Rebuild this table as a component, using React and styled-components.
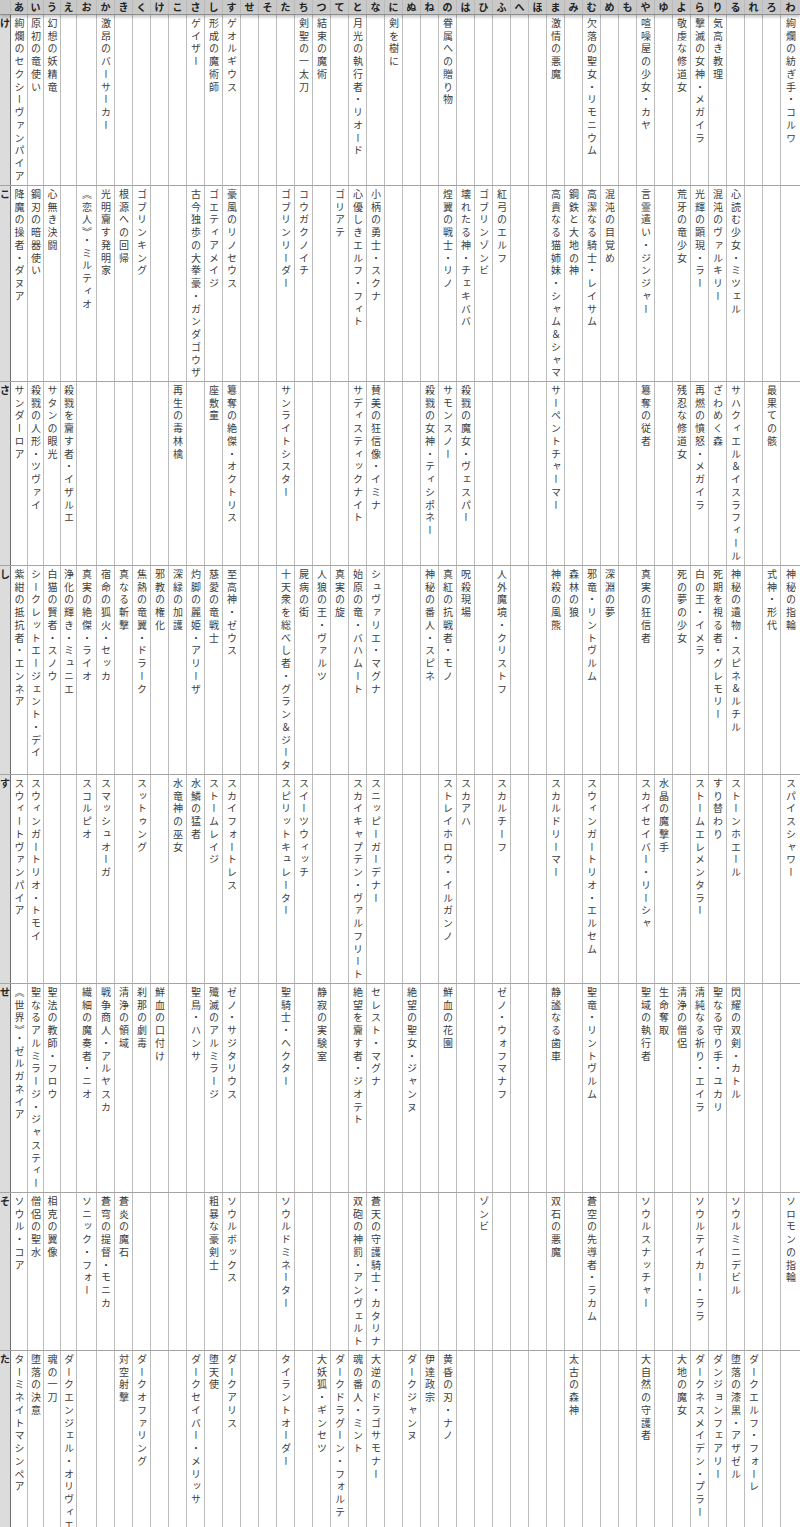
import React from 'react'
import styled, { createGlobalStyle } from 'styled-components'

const GlobalStyle = createGlobalStyle`
  *, *::before, *::after { box-sizing: border-box; }
  body {
    margin: 0;
    background: #fff;
    font-family: "Noto Sans CJK JP", "Noto Sans", sans-serif;
  }
`

const KANA = 'あいうえおかきくけこさしすせそたちつてとなにぬねのはひふへほまみむめもやゆよらりるれろわ'.split('')

// label column + 44 kana columns, widths taken from the sheet
const COLUMNS = '11px 17px 16px 17px 16px 20px repeat(38, 18px) 19px'

const ROWS = [
  {
    label: 'け',
    cells: {
      あ: '絢爛のセクシーヴァンパイア', い: '原初の竜使い', う: '幻想の妖精竜', か: '激昂のバーサーカー',
      さ: 'ゲイザー', し: '形成の魔術師', す: 'ゲオルギウス', ち: '剣聖の一太刀', つ: '結束の魔術',
      と: '月光の執行者・リオード', に: '剣を樹に', の: '眷属への贈り物', ま: '激情の悪魔',
      む: '欠落の聖女・リモニウム', や: '喧噪屋の少女・カヤ', よ: '敬虔な修道女', ら: '撃滅の女神・メガイラ',
      り: '気高き教理', わ: '絢爛の紡ぎ手・コルワ',
    },
  },
  {
    label: 'こ',
    cells: {
      あ: '降魔の操者・ダヌア', い: '鋼刃の暗器使い', う: '心無き決闘', お: '《恋人》・ミルティオ',
      か: '光明齎す発明家', き: '根源への回帰', く: 'ゴブリンキング', さ: '古今独歩の大拳豪・ガンダゴウザ',
      し: 'ゴエティアメイジ', す: '豪風のリノセウス', た: 'ゴブリンリーダー', ち: 'コウガクノイチ',
      て: 'ゴリアテ', と: '心優しきエルフ・フィト', な: '小柄の勇士・スクナ', の: '煌翼の戦士・リノ',
      は: '壊れたる神・チェキババ', ひ: 'ゴブリンゾンビ', ふ: '紅弓のエルフ', ま: '高貴なる猫姉妹・シャム＆シャマ',
      み: '鋼鉄と大地の神', む: '高潔なる騎士・レイサム', め: '混沌の目覚め', や: '言霊遣い・ジンジャー',
      よ: '荒牙の竜少女', ら: '光輝の顕現・ラー', り: '混沌のヴァルキリー', る: '心読む少女・ミツェル',
    },
  },
  {
    label: 'さ',
    cells: {
      あ: 'サンダーロア', い: '殺戮の人形・ツヴァイ', う: 'サタンの眼光', え: '殺戮を齎す者・イザルエ',
      こ: '再生の毒林檎', し: '座敷童', す: '簒奪の絶傑・オクトリス', た: 'サンライトシスター',
      と: 'サディスティックナイト', な: '賛美の狂信像・イミナ', ね: '殺戮の女神・ティシポネー',
      の: 'サモンスノー', は: '殺戮の魔女・ヴェスパー', ま: 'サーペントチャーマー', や: '簒奪の従者',
      よ: '残忍な修道女', ら: '再燃の憤怒・メガイラ', り: 'ざわめく森', る: 'サハクィエル＆イスラフィール',
      ろ: '最果ての骸',
    },
  },
  {
    label: 'し',
    cells: {
      あ: '紫紺の抵抗者・エンネア', い: 'シークレットエージェント・デイ', う: '白猫の賢者・スノウ',
      え: '浄化の輝き・ミュニエ', お: '真実の絶傑・ライオ', か: '宿命の狐火・セッカ', き: '真なる斬撃',
      く: '焦熱の竜翼・ドラーク', け: '邪教の権化', こ: '深緑の加護', さ: '灼脚の麗姫・アリーザ',
      し: '慈愛の竜戦士', す: '至高神・ゼウス', た: '十天衆を総べし者・グラン＆ジータ', ち: '屍病の街',
      つ: '人狼の王・ヴァルツ', て: '真実の旋', と: '始原の竜・バハムート', な: 'シュヴァリエ・マグナ',
      ね: '神秘の番人・スピネ', の: '真紅の抗戦者・モノ', は: '呪殺現場', ふ: '人外魔境・クリストフ',
      ま: '神殺の風熊', み: '森林の狼', む: '邪竜・リントヴルム', め: '深淵の夢', や: '真実の狂信者',
      よ: '死の夢の少女', ら: '白の王・イメラ', り: '死期を視る者・グレモリー', る: '神秘の遺物・スピネ＆ルチル',
      ろ: '式神・形代', わ: '神秘の指輪',
    },
  },
  {
    label: 'す',
    cells: {
      あ: 'スウィートヴァンパイア', い: 'スウィンガートリオ・トモイ', お: 'スコルピオ', か: 'スマッシュオーガ',
      く: 'スットゥング', こ: '水竜神の巫女', さ: '水鱗の猛者', し: 'ストームレイジ', す: 'スカイフォートレス',
      た: 'スピリットキュレーター', ち: 'スイーツウィッチ', と: 'スカイキャプテン・ヴァルフリート',
      な: 'スニッピーガーデナー', の: 'ストレイホロウ・イルガンノ', は: 'スカアハ', ふ: 'スカルチーフ',
      ま: 'スカルドリーマー', む: 'スウィンガートリオ・エルセム', や: 'スカイセイバー・リーシャ',
      ゆ: '水晶の魔撃手', ら: 'ストームエレメンタラー', り: 'すり替わり', る: 'ストーンホエール',
      わ: 'スパイスシャワー',
    },
  },
  {
    label: 'せ',
    cells: {
      あ: '《世界》・ゼルガネイア', い: '聖なるアルミラージ・ジャスティー', う: '聖法の教師・フロウ',
      お: '繊細の魔奏者・ニオ', か: '戦争商人・アルヤスカ', き: '清浄の領域', く: '刹那の劇毒',
      け: '鮮血の口付け', さ: '聖鳥・ハンサ', し: '殲滅のアルミラージ', す: 'ゼノ・サジタリウス',
      た: '聖騎士・ヘクター', つ: '静寂の実験室', と: '絶望を齎す者・ジオテト', な: 'セレスト・マグナ',
      ぬ: '絶望の聖女・ジャンヌ', の: '鮮血の花園', ふ: 'ゼノ・ウォフマナフ', ま: '静謐なる歯車',
      む: '聖竜・リントヴルム', や: '聖域の執行者', ゆ: '生命奪取', よ: '清浄の僧侶',
      ら: '清純なる祈り・エイラ', り: '聖なる守り手・ユカリ', る: '閃耀の双剣・カトル',
    },
  },
  {
    label: 'そ',
    cells: {
      あ: 'ソウル・コア', い: '僧侶の聖水', う: '相克の翼像', お: 'ソニック・フォー', か: '蒼穹の提督・モニカ',
      き: '蒼炎の魔石', し: '粗暴な豪剣士', す: 'ソウルボックス', た: 'ソウルドミネーター',
      と: '双砲の神罰・アンヴェルト', な: '蒼天の守護騎士・カタリナ', ひ: 'ゾンビ', ま: '双石の悪魔',
      む: '蒼空の先導者・ラカム', や: 'ソウルスナッチャー', ら: 'ソウルテイカー・ララ', る: 'ソウルミニデビル',
      わ: 'ソロモンの指輪',
    },
  },
  {
    label: 'た',
    cells: {
      あ: 'ターミネイトマシンペア', い: '堕落の決意', う: '魂の一刀', え: 'ダークエンジェル・オリヴィエ',
      き: '対空射撃', く: 'ダークオファリング', さ: 'ダークセイバー・メリッサ', し: '堕天使',
      す: 'ダークアリス', た: 'タイラントオーダー', つ: '大妖狐・ギンセツ', て: 'ダークドラグーン・フォルテ',
      と: '魂の番人・ミント', な: '大逆のドラゴサモナー', ぬ: 'ダークジャンヌ', ね: '伊達政宗',
      の: '黄昏の刃・ナノ', み: '太古の森神', や: '大自然の守護者', よ: '大地の魔女',
      ら: 'ダークネスメイデン・プラー', り: 'ダンジョンフェアリー', る: '堕落の漆黒・アザゼル',
      れ: 'ダークエルフ・フォーレ',
    },
  },
]

const Sheet = styled.div`
  width: 800px;
  overflow: hidden;
`

const HeaderRow = styled.div`
  display: grid;
  grid-template-columns: ${COLUMNS};
  height: 15px;
  background: #c9c9c9;
  border-bottom: 1px solid #8c8c8c;
  box-shadow: 0 2px 3px rgba(0, 0, 0, 0.22);
  position: relative;
  z-index: 1;
`

const HeadCell = styled.div`
  display: flex;
  align-items: center;
  justify-content: center;
  font-size: 10px;
  font-weight: bold;
  line-height: 1;
  color: #222;
  border-right: 1px solid #bababa;

  &:last-child {
    border-right: none;
  }
`

const Row = styled.div`
  display: grid;
  grid-template-columns: ${COLUMNS};
  border-bottom: 1px solid #a3a3a3;
`

const RowLabel = styled.div`
  background: #dcdcdc;
  border-right: 1px solid #6e6e6e;
  padding-top: 2px;
  text-align: center;
  font-size: 10px;
  font-weight: bold;
  line-height: 12px;
  color: #222;
`

const Cell = styled.div`
  display: flex;
  justify-content: center;
  padding: 3px 0 1px;
  border-right: 1px solid #bcbcbc;

  &:last-child {
    border-right: none;
  }
`

const Name = styled.span`
  writing-mode: vertical-rl;
  font-size: 10px;
  letter-spacing: 2.75px;
  line-height: 1;
  color: #3c3c3c;
`

export default function App() {
  return (
    <>
      <GlobalStyle />
      <Sheet>
        <HeaderRow>
          <HeadCell />
          {KANA.map((k) => (
            <HeadCell key={k}>{k}</HeadCell>
          ))}
        </HeaderRow>

        {ROWS.map((row) => (
          <Row key={row.label}>
            <RowLabel>{row.label}</RowLabel>
            {KANA.map((k) => (
              <Cell key={k}>{row.cells[k] && <Name>{row.cells[k]}</Name>}</Cell>
            ))}
          </Row>
        ))}
      </Sheet>
    </>
  )
}
